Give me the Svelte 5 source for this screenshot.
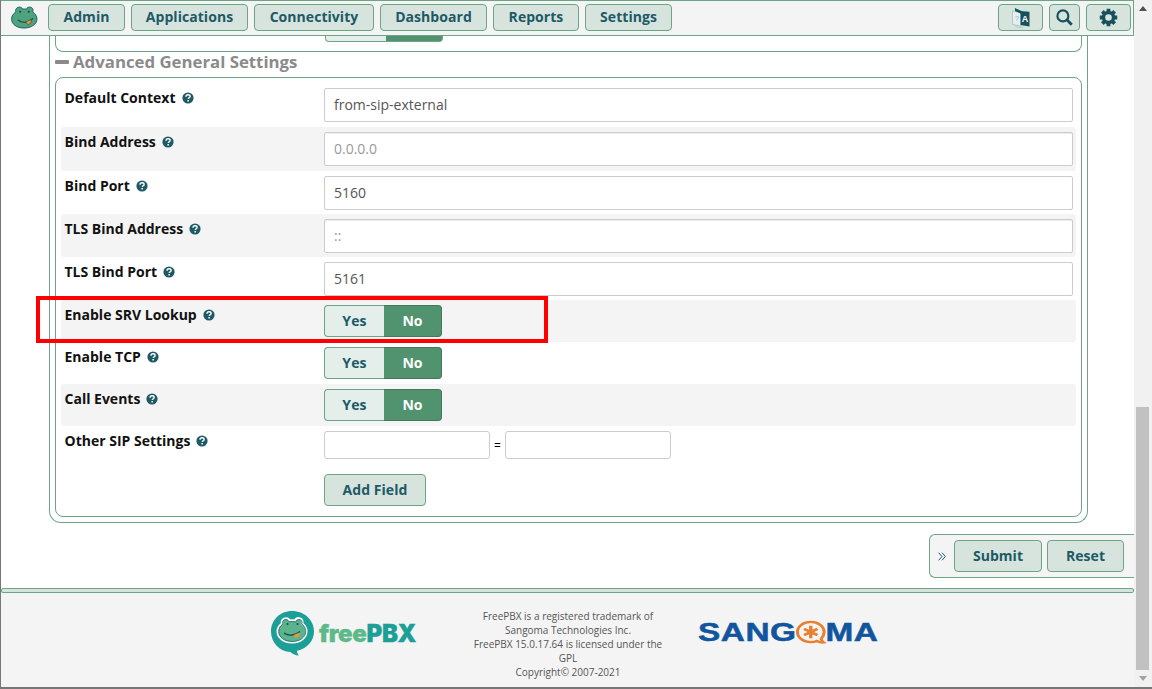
<script>
  const nav = ['Admin', 'Applications', 'Connectivity', 'Dashboard', 'Reports', 'Settings'];
  const rows = [
    { label: 'Default Context', kind: 'text', value: 'from-sip-external', cls: 'r44' },
    { label: 'Bind Address', kind: 'ph', value: '0.0.0.0', cls: 'r44 alt' },
    { label: 'Bind Port', kind: 'text', value: '5160', cls: 'r43' },
    { label: 'TLS Bind Address', kind: 'ph', value: '::', cls: 'r43 alt' },
    { label: 'TLS Bind Port', kind: 'text', value: '5161', cls: 'r43' },
    { label: 'Enable SRV Lookup', kind: 'toggle', cls: 'r42 alt' },
    { label: 'Enable TCP', kind: 'toggle', cls: 'r42' },
    { label: 'Call Events', kind: 'toggle', cls: 'r42 alt' }
  ];
</script>

{#snippet help()}
  <svg class="help" viewBox="0 0 12 12" aria-hidden="true">
    <circle cx="6" cy="6" r="5.600" fill="#1d5a66" />
    <path d="M4 4.700c0-1.200.9-1.900 2.100-1.900s2 .7 2 1.600c0 .8-.5 1.200-1.100 1.500-.5.300-.7.500-.7 1" fill="none" stroke="#fff" stroke-width="1.400" />
    <rect x="5.400" y="8" width="1.500" height="1.500" fill="#fff" />
  </svg>
{/snippet}

<div class="window">
  <div class="page">
    <nav class="navbar">
      <span class="brand">
        <svg width="27" height="23" viewBox="0 0 28 24" aria-hidden="true">
          <path d="M7 1.500c2.200-1 4.400 0 5 1.800 1.300-.3 2.700-.3 4 0 .6-1.800 2.800-2.800 5-1.800 2 .9 2.300 3 1.500 4.700 2.700 1.700 4.500 4.300 4.500 7.300 0 5.500-5.800 9.500-13.500 9.500S.5 19 .5 13.500c0-3 1.800-5.600 4.500-7.300C4.200 4.500 5 2.400 7 1.500z" fill="#4ea27e" stroke="#1f5f63" stroke-width="1" />
          <circle cx="9.500" cy="6" r="1.100" fill="#17474f" />
          <circle cx="18.500" cy="6" r="1.100" fill="#17474f" />
          <path d="M7 14.500c4 3.500 11 3.500 16-1.500" fill="none" stroke="#17474f" stroke-width="1.200" />
          <path d="M15.500 16.500l5.500-2.500c.5 2.800-.8 4.900-2.800 5.200-1.400.2-2.400-1.200-2.700-2.700z" fill="#e9973a" stroke="#17474f" stroke-width=".6" />
        </svg>
      </span>
      <div class="menu">
        {#each nav as item}
          <button class="btn navbtn">{item}</button>
        {/each}
      </div>
      <div class="tools">
        <button class="btn tool lang" aria-label="Language">
          <svg width="24" height="24" viewBox="0 0 24 24">
            <path d="M3.500 5l8.500 1.500V20l-8.500-1.500z" fill="#e6eeee" stroke="#a9c0cc" stroke-width=".8" />
            <path d="M6 19.500c2 2 5 2.500 8 1.500" fill="none" stroke="#a9c0cc" stroke-width=".8" />
            <path d="M6 2l6.500 3v3L6 5z" fill="#17515c" />
            <path d="M11.500 5l9 .8v14.700l-9-1.500z" fill="#17515c" />
            <text x="12.700" y="16" class="langa">A</text>
            <text x="6" y="14.500" class="langz">?</text>
          </svg>
        </button>
        <button class="btn tool search" aria-label="Search">
          <svg width="17" height="17" viewBox="0 0 18 18">
            <circle cx="7.300" cy="7.300" r="5.800" fill="none" stroke="#17515c" stroke-width="2.300" />
            <path d="M11.500 11.500l5.200 5.200" stroke="#17515c" stroke-width="3" />
          </svg>
        </button>
        <button class="btn tool gear" aria-label="Settings">
          <svg width="19" height="19" viewBox="0 0 20 20">
            <circle cx="10" cy="10" r="5.300" fill="none" stroke="#17515c" stroke-width="3.600" />
            <path d="M8 .8h4v4h-4zM8 15.200h4v4h-4zM.8 8h4v4h-4zM15.200 8h4v4h-4z" fill="#17515c" />
            <path d="M8 .8h4v4h-4zM8 15.200h4v4h-4zM.8 8h4v4h-4zM15.200 8h4v4h-4z" fill="#17515c" transform="rotate(45 10 10)" />
          </svg>
        </button>
      </div>
    </nav>

    <main class="content">
      <section class="outer">
        <div class="prior"></div>
        <h2 class="section-title"><span class="minus"></span>Advanced General Settings</h2>
        <div class="inner">
          {#each rows as r}
            <div class="row {r.cls}">
              <div class="label">{r.label}{@render help()}</div>
              {#if r.kind === 'toggle'}
                <div class="toggle">
                  <span class="yes">Yes</span><span class="no">No</span>
                </div>
              {:else}
                <div class="field {r.kind === 'ph' ? 'ph' : ''}">{r.value}</div>
              {/if}
            </div>
          {/each}
          <div class="row other">
            <div class="label">Other SIP Settings{@render help()}</div>
            <div class="pair">
              <div class="small"></div>
              <span class="eq">=</span>
              <div class="small"></div>
            </div>
          </div>
          <div class="addrow">
            <button class="btn add">Add Field</button>
          </div>
        </div>
      </section>

      <div class="actions">
        <div class="actionbar">
          <svg class="chev" width="8" height="9" viewBox="0 0 8 9" aria-hidden="true">
            <path d="M.7.700L4 4.500.7 8.300M4 .700L7.300 4.500 4 8.300" fill="none" stroke="#1d5a7a" stroke-width="1" />
          </svg>
          <button class="btn submit">Submit</button>
          <button class="btn reset">Reset</button>
        </div>
      </div>
    </main>

    <footer class="footer">
      <div class="rule"></div>
      <div class="foot-inner">
        <div class="fpbx">
          <svg width="46" height="46" viewBox="0 0 46 46" aria-hidden="true">
            <path d="M22 1C10 1 1 10 1 21.500c0 11 8.500 20 19.500 20.500 1.500 1.500 4.500 3.500 8.500 3.500-1.300-1.200-2-2.700-2-4.700C37 38.500 44 31 44 21.500 44 10 34.500 1 22 1z" fill="#1b9f97" />
            <path d="M14.500 8.500c2.500-.8 4.500.2 5.300 2 1.800-.4 3.400-.4 5 0 .9-1.800 3-2.800 5.300-2 2.300.8 3 3.200 2.200 5.200 2.700 1.800 4.200 4.700 4.200 7.800 0 6.500-6.500 11-14.500 11S7.500 28 7.500 21.500c0-3.100 1.600-6 4.500-7.800-.8-2-.1-4.400 2.500-5.200z" fill="#5bb48e" stroke="#fff" stroke-width="2" />
            <path d="M14.500 9.800c2-.6 3.600.2 4.600 2 2-.4 4.400-.4 6.500 0 1-1.800 2.600-2.600 4.600-2 1.800.6 2.300 2.500 1.500 4.200 2.600 1.600 4 4.400 4 7.500 0 5.800-6 10-13.500 10s-13.500-4.200-13.500-10c0-3.100 1.500-5.900 4.300-7.500-.8-1.700-.3-3.600 1.500-4.200z" fill="none" stroke="#1f5f63" stroke-width=".8" />
            <circle cx="17.500" cy="14" r="1" fill="#17474f" />
            <circle cx="27.500" cy="14" r="1" fill="#17474f" />
            <path d="M14 23c4 3 11 3 16-1.500" fill="none" stroke="#17474f" stroke-width="1.200" />
            <path d="M23.500 25l6-2.500c.3 3-1 4.800-3 5.100-1.500.2-2.700-1-3-2.600z" fill="#e9973a" />
          </svg>
          <span class="wordmark"><span class="free">free</span><span class="pbx">PBX</span></span>
        </div>
        <div class="legal">
          FreePBX is a registered trademark of<br />
          Sangoma Technologies Inc.<br />
          FreePBX 15.0.17.64 is licensed under the<br />
          GPL<br />
          Copyright© 2007-2021
        </div>
        <div class="sangoma">
          <span>SANG</span><svg class="o" width="25" height="27" viewBox="0 0 26 28" aria-hidden="true">
            <path d="M13 3C6.800 3 2 7.500 2 13.500S6.800 24 13 24c2 0 3.600-.4 5-1.200 1.500 1 3.500 1.700 5.500 1.500-1-.9-1.700-2.400-1.900-3.700C23 18.800 24 16.500 24 13.500 24 7.500 19.200 3 13 3z" fill="none" stroke="#e97f30" stroke-width="2.500" />
            <path d="M13 7v13M7.400 10.250l11.200 6.500M18.600 10.250L7.400 16.750" stroke="#e97f30" stroke-width="2.800" />
          </svg><span>MA</span>
        </div>
      </div>
    </footer>

    <div class="redbox"></div>
  </div>

  <aside class="scrollbar">
    <span class="arrow up"></span>
    <div class="track"><div class="thumb"></div></div>
    <span class="arrow down"></span>
  </aside>
</div>

<style>
  :global(body) { margin: 0; background: #fff; }
  .window {
    width: 1152px; height: 689px; box-sizing: border-box; display: flex; overflow: hidden;
    font-family: "Open Sans", sans-serif; color: #000;
    border-left: 1px solid #777; border-bottom: 2px solid #777;
  }
  .page { position: relative; width: 1133px; height: 687px; display: flex; flex-direction: column; }

  .btn {
    box-sizing: border-box; font-family: inherit; font-size: 14px; font-weight: 700; letter-spacing: .05px;
    color: #1d5a66; background: #d7e4de; border: 1px solid #6ba585; border-radius: 4px; padding: 0 0 2px; height: 27px;
    display: inline-flex; align-items: center; justify-content: center;
  }

  .navbar {
    box-sizing: border-box; height: 36px; flex: none; display: flex; align-items: flex-start;
    background: #f4f4f4; border-top: 1px solid #6ba585; border-bottom: 1px solid #6ba585; border-right: 1px solid #6ba585;
  }
  .brand { width: 47px; display: flex; justify-content: center; padding-top: 5px; }
  .brand svg { display: block; }
  .menu { display: flex; gap: 6px; padding-top: 3px; }
  .navbtn:nth-child(1) { width: 77px; }
  .navbtn:nth-child(2) { width: 117px; }
  .navbtn:nth-child(3) { width: 120px; }
  .navbtn:nth-child(4) { width: 107px; }
  .navbtn:nth-child(5) { width: 86px; }
  .navbtn:nth-child(6) { width: 87px; }
  .tools { margin-left: auto; display: flex; gap: 6px; padding: 3px 2px 0 0; }
  .tool { height: 27px; padding: 0; }
  .lang { width: 45px; }
  .search { width: 31px; }
  .gear { width: 45px; }
  .langa { font: 700 9px "Liberation Sans", sans-serif; fill: #fff; }
  .langz { font: 7px "Liberation Sans", sans-serif; fill: #8fa9b4; }

  .content { flex: 1; min-height: 0; }
  .outer {
    box-sizing: border-box; margin-left: 48px; width: 1039px; height: 487px; padding: 0 5px 4px 5px;
    border: 1px solid #6ba585; border-top: 0; border-radius: 0 0 12px 12px;
  }
  .prior {
    height: 16px; box-sizing: border-box; border: 1px solid #6ba585; border-top: 0; border-radius: 0 0 8px 8px; position: relative;
  }
  .prior::after {
    content: ""; position: absolute; left: 269px; top: 0; width: 118px; height: 6px; box-sizing: border-box;
    background: linear-gradient(to right, #e4eeea 0 60px, #52936f 60px); border: 1px solid #6ba585; border-top: 0; border-radius: 0 0 4px 4px;
  }
  .section-title {
    margin: 0 0 5px; height: 20px; display: flex; align-items: center; font-size: 16.800px; font-weight: 700; color: #8a8a8a; line-height: 20px;
  }
  .minus { width: 14px; height: 4px; margin: 0 4px 0 0; background: #8a8a8a; border-radius: 1px; }
  .inner {
    box-sizing: border-box; height: 440px; padding: 5px 5px 0; border: 1px solid #6ba585; border-radius: 8px;
  }
  .row { display: flex; align-items: flex-start; box-sizing: border-box; padding-left: 3.500px; }
  .alt { background: #f4f4f4; border-radius: 3px; }
  .r44 { height: 44px; }
  .r43 { height: 43px; }
  .r42 { height: 42px; }
  .label {
    width: 259.500px; flex: none; font-size: 14px; font-weight: 700; line-height: 20px; padding-top: 5px; display: flex; align-items: center; color: #111;
  }
  .help { width: 12px; height: 12px; margin-left: 6px; flex: none; }
  .field {
    box-sizing: border-box; width: 749px; height: 34px; margin-top: 5px; padding: 0 9px; line-height: 32px;
    font-size: 14px; color: #555; background: #fff; border: 1px solid #ccc; border-radius: 2px;
  }
  .field.ph { color: #999; box-shadow: inset 0 1px 1px rgba(0,0,0,.075); }
  .toggle { display: flex; height: 32px; margin-top: 5px; font-size: 14px; font-weight: 700; letter-spacing: .1px; }
  .yes, .no {
    box-sizing: border-box; display: flex; align-items: center; justify-content: center; height: 32px; padding-bottom: 2px;
  }
  .yes { width: 60px; color: #1d5a66; background: #e4eeea; border: 1px solid #6ba585; border-right: 0; border-radius: 4px 0 0 4px; }
  .no { width: 58px; color: #fff; background: #52936f; border: 1px solid #3f7a5a; border-left: 0; border-radius: 0 4px 4px 0; }
  .other { height: 48px; }
  .pair { display: flex; align-items: center; margin-top: 5px; }
  .small { box-sizing: border-box; width: 166px; height: 28px; background: #fff; border: 1px solid #ccc; border-radius: 3px; }
  .eq { width: 15px; text-align: center; font-size: 12px; }
  .addrow { padding-left: 263px; }
  .add { width: 102px; height: 32px; }

  .actions { display: flex; justify-content: flex-end; margin-top: 11px; }
  .actionbar {
    box-sizing: border-box; width: 205px; height: 44px; display: flex; align-items: center; padding-left: 8px;
    background: #f4f4f4; border: 1px solid #6ba585; border-right: 0; border-radius: 6px 0 0 6px;
  }
  .chev { flex: none; margin-right: 8px; }
  .submit { width: 88px; height: 32px; }
  .reset { width: 77px; height: 32px; margin-left: 5px; }

  .footer { flex: none; height: 99px; background: #f4f4f4; }
  .rule { box-sizing: border-box; height: 5px; background: #d7e4de; border: 1px solid #6ba585; border-radius: 2px; }
  .foot-inner { position: relative; display: flex; height: 94px; }
  .fpbx { display: flex; align-items: center; gap: 3px; margin: 17px 0 0 269px; height: 46px; width: 185px; }
  .fpbx svg { flex: none; }
  .wordmark { font-family: "Inter", "Liberation Sans", sans-serif; font-weight: 900; font-size: 24px; letter-spacing: -.35px; -webkit-text-stroke: .3px currentColor; }
  .free { color: #5db98a; }
  .pbx { color: #1b9f97; }
  .legal {
    width: 200px; margin: 16px 0 0 13px; text-align: center; font-size: 10px; line-height: 14px; color: #555;
  }
  .sangoma {
    margin: 26px 0 0 30px; display: flex; align-items: center; height: 27px; font-family: "Liberation Sans", sans-serif;
    font-weight: 700; font-size: 26.500px; color: #11559e; letter-spacing: .4px; -webkit-text-stroke: .5px #11559e; transform: scaleX(1.26); transform-origin: left center;
  }
  .sangoma .o { flex: none; margin: 0 -1px; }

  .redbox {
    position: absolute; left: 35px; top: 296px; width: 512px; height: 47px; box-sizing: border-box; border: 4px solid #fe0000;
  }

  .scrollbar { width: 18px; flex: none; background: #f1f1f1; display: flex; flex-direction: column; align-items: center; padding-right: 1px; box-sizing: border-box; }
  .track { flex: 1; width: 100%; position: relative; }
  .thumb { position: absolute; left: 2px; right: 2px; top: 390px; bottom: 0; background: #c1c1c1; }
  .arrow { width: 0; height: 0; border-left: 4px solid transparent; border-right: 4px solid transparent; margin: 6px 0; }
  .arrow.up { border-bottom: 5px solid #505050; }
  .arrow.down { border-top: 5px solid #a3a3a3; }
</style>
